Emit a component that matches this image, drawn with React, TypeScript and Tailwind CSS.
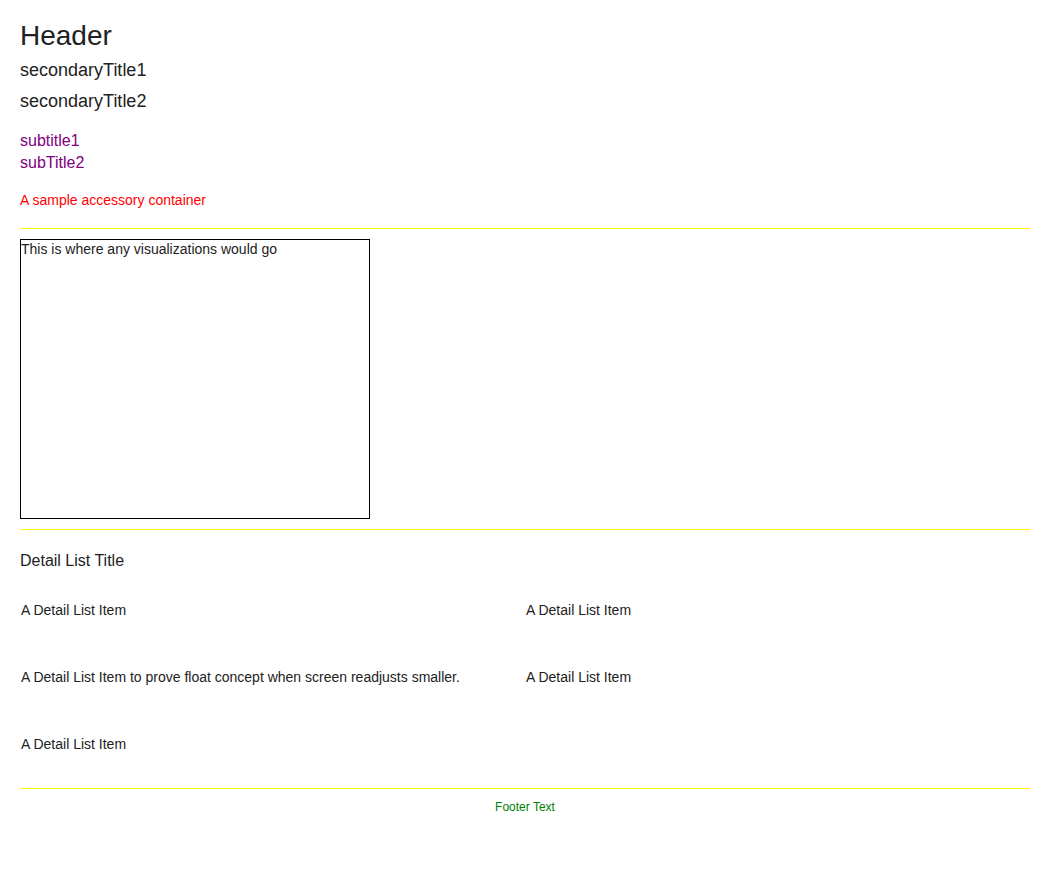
const ITEMS = [
  'A Detail List Item',
  'A Detail List Item',
  'A Detail List Item to prove float concept when screen readjusts smaller.',
  'A Detail List Item',
  'A Detail List Item',
]

export default function App() {
  return (
    <div className="min-h-screen bg-white px-5 pt-5 text-[#222] font-['Liberation_Sans',Arial,sans-serif]">
      <h1 className="text-[28px] leading-[32px]">Header</h1>
      <div className="mt-[6px] text-[18px] leading-[24px]">secondaryTitle1</div>
      <div className="mt-[7px] text-[18px] leading-[24px]">secondaryTitle2</div>

      <div className="mt-[17px] text-[16px] leading-[22px] text-[#800080]">
        <div>subtitle1</div>
        <div>subTitle2</div>
      </div>

      <div className="mt-4 text-sm leading-5 text-[#ff0000]">A sample accessory container</div>

      <div className="mt-[18px] h-px bg-[#ffff00]" />

      <div className="mt-[10px] h-[280px] w-[350px] border border-black text-sm leading-[18px]">
        This is where any visualizations would go
      </div>

      <div className="mt-[10px] h-px bg-[#ffff00]" />

      <div className="mt-5 text-[16px] leading-[22px]">Detail List Title</div>

      <div className="mt-7 grid grid-cols-2 gap-y-[47px] text-sm leading-5">
        {ITEMS.map((t, i) => (
          <div key={i} className="pl-px">{t}</div>
        ))}
      </div>

      <div className="mt-[34px] h-px bg-[#ffff00]" />
      <div className="mt-[10px] text-center text-xs leading-4 text-[#008000]">Footer Text</div>
    </div>
  )
}
